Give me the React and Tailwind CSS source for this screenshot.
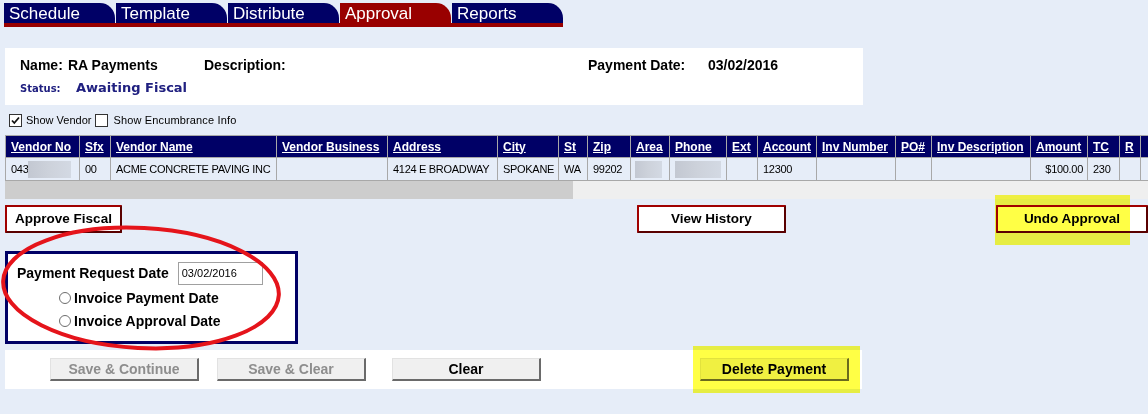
const NAVY = "bg-[#000066]";

const tabs = [
  { label: "Schedule", active: false },
  { label: "Template", active: false },
  { label: "Distribute", active: false },
  { label: "Approval", active: true },
  { label: "Reports", active: false },
];

const cols = [
  { h: "Vendor No", w: 74 },
  { h: "Sfx", w: 31 },
  { h: "Vendor Name", w: 166 },
  { h: "Vendor Business", w: 111 },
  { h: "Address", w: 110 },
  { h: "City", w: 61 },
  { h: "St", w: 29 },
  { h: "Zip", w: 43 },
  { h: "Area", w: 39 },
  { h: "Phone", w: 57 },
  { h: "Ext", w: 31 },
  { h: "Account", w: 59 },
  { h: "Inv Number", w: 79 },
  { h: "PO#", w: 36 },
  { h: "Inv Description", w: 99 },
  { h: "Amount", w: 57 },
  { h: "TC", w: 32 },
  { h: "R", w: 21 },
  { h: "", w: 80 },
];

function Blur({ w }) {
  return (
    <span
      className="inline-block h-[17px] bg-gradient-to-r from-[#c3c8d2] via-[#cdd2db] to-[#d3d9e3]"
      style={{ width: w }}
    />
  );
}

function CheckBox({ checked }) {
  return (
    <span className="inline-flex w-[13px] h-[13px] border border-[#333] bg-white items-center justify-center">
      {checked && (
        <svg width="11" height="11" viewBox="0 0 11 11">
          <path d="M2 5.5 L4.3 8 L9 2.5" stroke="#111" strokeWidth="1.8" fill="none" />
        </svg>
      )}
    </span>
  );
}

function Radio() {
  return (
    <span className="inline-block w-[12px] h-[12px] rounded-full border border-[#6d6d6d] bg-white" />
  );
}

function RedButton({ children, w }) {
  return (
    <div
      className="h-[28px] flex items-center justify-center bg-white border-2 border-[#a00000] border-r-[#5a0000] border-b-[#5a0000] text-[13.5px] font-bold rounded-[1px]"
      style={{ width: w }}
    >
      {children}
    </div>
  );
}

function GrayButton({ children, disabled }) {
  return (
    <div
      className={
        "w-[149px] h-[23px] flex items-center justify-center bg-[#f0f0f0] border border-[#e2e2e2] border-r-2 border-b-2 border-r-[#6a6a6a] border-b-[#6a6a6a] text-[14px] font-bold " +
        (disabled ? "text-[#8d8d8d]" : "text-black")
      }
    >
      {children}
    </div>
  );
}

function Td({ children, className = "" }) {
  return (
    <td className={"border border-[#a8a8a8] px-[5px] whitespace-nowrap align-middle " + className}>
      <div className="flex items-center h-[22px]">{children}</div>
    </td>
  );
}

export default function App() {
  return (
    <div className="relative w-[1148px] h-[414px] overflow-hidden bg-[#e6edf8] font-['Liberation_Sans',Arial,sans-serif] text-black">
      {/* Tabs */}
      <div className="pt-[3px] pl-[4px]">
        <div className="flex gap-[1px]">
          {tabs.map((t) => (
            <div
              key={t.label}
              className={
                "w-[111px] h-[20px] rounded-tr-[15px] pl-[5px] text-white text-[17px] leading-[22px] " +
                (t.active ? "bg-[#990000]" : NAVY)
              }
            >
              {t.label}
            </div>
          ))}
        </div>
        <div className="h-[4px] w-[559px] bg-[#990000]" />
      </div>

      {/* Header panel */}
      <div className="ml-[5px] mt-[21px] w-[858px] h-[57px] bg-white pl-[15px] pt-[8px]">
        <div className="flex items-center h-[18px] text-[14px] font-bold">
          <div className="w-[48px]">Name:</div>
          <div className="w-[136px]">RA Payments</div>
          <div className="w-[384px]">Description:</div>
          <div className="w-[120px]">Payment Date:</div>
          <div>03/02/2016</div>
        </div>
        <div className="flex items-baseline mt-[4px] text-[#202080] font-bold font-['DejaVu_Sans',sans-serif]">
          <span className="w-[56px] text-[10px]">Status:</span>
          <span className="text-[13px]">Awaiting Fiscal</span>
        </div>
      </div>

      {/* Checkboxes */}
      <div className="mt-[9px] ml-[9px] h-[13px] flex items-center text-[11px]">
        <CheckBox checked />
        <span className="ml-[4px]">Show Vendor</span>
        <span className="ml-[4px] inline-flex"><CheckBox /></span>
        <span className="ml-[5px] tracking-[0.15px]">Show Encumbrance Info</span>
      </div>

      {/* Table */}
      <div className="mt-[8px] ml-[5px] w-[1300px]">
        <table className="border-collapse table-fixed" style={{ width: 1215 }}>
          <colgroup>
            {cols.map((c, i) => (
              <col key={i} style={{ width: c.w }} />
            ))}
          </colgroup>
          <thead>
            <tr className={NAVY + " h-[22px]"}>
              {cols.map((c, i) => (
                <th
                  key={i}
                  className="border border-[#a8a8a8] px-[5px] text-left text-[12px] font-bold text-white underline whitespace-nowrap overflow-hidden"
                >
                  {c.h}
                </th>
              ))}
            </tr>
          </thead>
          <tbody>
            <tr className="bg-[#e6edf8] text-[11px] tracking-[-0.3px]">
              <Td>
                <span>043</span>
                <Blur w={43} />
              </Td>
              <Td>00</Td>
              <Td>ACME CONCRETE PAVING INC</Td>
              <Td />
              <Td>4124 E BROADWAY</Td>
              <Td>SPOKANE</Td>
              <Td>WA</Td>
              <Td>99202</Td>
              <Td className="!px-[4px]"><Blur w={27} /></Td>
              <Td><Blur w={46} /></Td>
              <Td />
              <Td>12300</Td>
              <Td />
              <Td />
              <Td />
              <Td className="!px-[4px]"><span className="ml-auto">$100.00</span></Td>
              <Td>230</Td>
              <Td />
              <Td />
            </tr>
          </tbody>
        </table>
        {/* scrollbar */}
        <div className="flex h-[18px]">
          <div className="w-[568px] bg-[#cdcdcd]" />
          <div className="flex-1 bg-[#efefef]" />
        </div>
      </div>

      {/* Action buttons */}
      <div className="mt-[6px] ml-[5px] flex">
        <RedButton w={117}>Approve Fiscal</RedButton>
        <div className="ml-[515px]">
          <RedButton w={149}>View History</RedButton>
        </div>
        <div className="ml-[210px]">
          <RedButton w={152}>Undo Approval</RedButton>
        </div>
      </div>

      {/* Payment request box */}
      <div className="mt-[18px] ml-[5px] w-[293px] h-[93px] bg-white border-[3px] border-[#000066] pl-[9px] pt-[8px]">
        <div className="flex items-center">
          <span className="text-[14px] font-bold">Payment Request Date</span>
          <div className="ml-[9px] w-[85px] h-[23px] border border-[#a0a0a0] text-[11px] flex items-center pl-[3px]">
            03/02/2016
          </div>
        </div>
        <div className="ml-[42px] mt-[2px] flex items-center h-[22px] gap-[3px] text-[14px] font-bold">
          <Radio />
          <span>Invoice Payment Date</span>
        </div>
        <div className="ml-[42px] mt-[1px] flex items-center h-[22px] gap-[3px] text-[14px] font-bold">
          <Radio />
          <span>Invoice Approval Date</span>
        </div>
      </div>

      {/* Bottom bar */}
      <div className="mt-[6px] ml-[5px] w-[857px] h-[39px] bg-white flex items-center pl-[45px]">
        <GrayButton disabled>Save &amp; Continue</GrayButton>
        <div className="ml-[18px]"><GrayButton disabled>Save &amp; Clear</GrayButton></div>
        <div className="ml-[26px]"><GrayButton>Clear</GrayButton></div>
        <div className="ml-[159px]"><GrayButton>Delete Payment</GrayButton></div>
      </div>

      {/* Highlights (annotation overlays) */}
      <div className="absolute left-[995px] top-[195px] w-[135px] h-[50px] bg-[#ffff45] mix-blend-multiply" />
      <div className="absolute left-[693px] top-[346px] w-[167px] h-[47px] bg-[#ffff45] mix-blend-multiply" />

      {/* Red ellipse annotation */}
      <svg className="absolute left-0 top-[220px]" width="300" height="140" viewBox="0 0 300 140">
        <ellipse
          cx="141"
          cy="68"
          rx="138"
          ry="60"
          transform="rotate(3 141 68)"
          fill="none"
          stroke="#e5141b"
          strokeWidth="4"
        />
      </svg>
    </div>
  );
}
